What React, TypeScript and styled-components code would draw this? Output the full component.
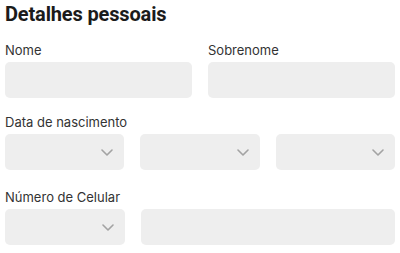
import React from 'react';
import styled, { createGlobalStyle } from 'styled-components';

const GlobalStyle = createGlobalStyle`
    html, body {
        margin: 0;
        padding: 0;
        background: #ffffff;
    }
    * {
        box-sizing: border-box;
    }
`;

const Wrapper = styled.div`
    font-family: 'Inter', 'Noto Sans', sans-serif;
    width: 400px;
    padding: 2px 5px 0 5px;
    display: flex;
    flex-direction: column;
`;

const Title = styled.div`
    font-family: 'Roboto', 'Inter', sans-serif;
    font-size: 20px;
    font-weight: 700;
    line-height: 24px;
    letter-spacing: -0.15px;
    color: #1b1b1b;
    margin-bottom: 16px;
`;

const Row = styled.div<{ $columns: string; $space?: number }>`
    display: grid;
    grid-template-columns: ${(p) => p.$columns};
    column-gap: 16px;
    margin-bottom: ${(p) => p.$space ?? 16}px;
`;

const Field = styled.div`
    display: flex;
    flex-direction: column;
    gap: 4px;
`;

const Label = styled.div`
    font-size: 13px;
    line-height: 16px;
    color: #333333;
    white-space: nowrap;
`;

const Box = styled.div`
    height: 36px;
    border-radius: 5px;
    background: #eeeeee;
`;

const SelectBox = styled(Box)`
    display: flex;
    align-items: center;
    justify-content: flex-end;
    padding-right: 11px;
`;

const Chevron = () => (
    <svg width="12" height="7" viewBox="0 0 12 7" fill="none">
        <path
            d="M1 1l5 5 5-5"
            stroke="#a3a3a3"
            strokeWidth="1.6"
            strokeLinecap="round"
            strokeLinejoin="round"
        />
    </svg>
);

const Select = () => (
    <SelectBox>
        <Chevron />
    </SelectBox>
);

const App = () => {
    return (
        <>
            <GlobalStyle />
            <Wrapper>
                <Title>Detalhes pessoais</Title>
                <Row $columns="1fr 1fr">
                    <Field>
                        <Label>Nome</Label>
                        <Box />
                    </Field>
                    <Field>
                        <Label>Sobrenome</Label>
                        <Box />
                    </Field>
                </Row>
                <Field>
                    <Label>Data de nascimento</Label>
                    <Row $columns="1fr 1fr 1fr" $space={19}>
                        <Select />
                        <Select />
                        <Select />
                    </Row>
                </Field>
                <Field>
                    <Label>Número de Celular</Label>
                    <Row $columns="120px 1fr">
                        <Select />
                        <Box />
                    </Row>
                </Field>
            </Wrapper>
        </>
    );
};

export default App;
